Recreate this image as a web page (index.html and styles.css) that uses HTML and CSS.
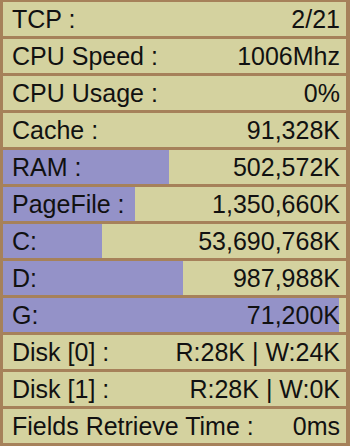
FILE: index.html
```html
<!doctype html>
<html>
  <head>
    <meta charset="UTF-8" />
    <title>System Monitor</title>
    <link rel="stylesheet" href="styles.css">
  </head>
  <body>
    <div class="panel">
      <div class="row"><span class="label">TCP :</span><span class="value">2/21</span></div>
      <div class="row"><span class="label">CPU Speed :</span><span class="value">1006Mhz</span></div>
      <div class="row"><span class="label">CPU Usage :</span><span class="value">0%</span></div>
      <div class="row"><span class="label">Cache :</span><span class="value">91,328K</span></div>
      <div class="row">
        <div class="bar" style="width: 48.5%"></div>
        <span class="label">RAM :</span><span class="value">502,572K</span>
      </div>
      <div class="row">
        <div class="bar" style="width: 38.4%"></div>
        <span class="label">PageFile :</span><span class="value">1,350,660K</span>
      </div>
      <div class="row">
        <div class="bar" style="width: 29%"></div>
        <span class="label">C:</span><span class="value">53,690,768K</span>
      </div>
      <div class="row">
        <div class="bar" style="width: 52.6%"></div>
        <span class="label">D:</span><span class="value">987,988K</span>
      </div>
      <div class="row">
        <div class="bar" style="width: 98%"></div>
        <span class="label">G:</span><span class="value">71,200K</span>
      </div>
      <div class="row"><span class="label">Disk [0] :</span><span class="value">R:28K | W:24K</span></div>
      <div class="row"><span class="label">Disk [1] :</span><span class="value">R:28K | W:0K</span></div>
      <div class="row"><span class="label">Fields Retrieve Time :</span><span class="value">0ms</span></div>
    </div>
  </body>
</html>
```

FILE: styles.css
```css
body {
  margin: 0;
  padding: 0;
  background-color: #a6815a;
  font-family: "Liberation Sans", Arial, sans-serif;
  color: #111;
}

.panel {
  width: 350px;
  height: 446px;
  box-sizing: border-box;
  padding: 2px 4px 3px 3px;
  display: flex;
  flex-direction: column;
  gap: 3px;
  overflow: hidden;
}

.row {
  position: relative;
  height: 34px;
  flex: none;
  display: flex;
  align-items: center;
  justify-content: space-between;
  padding: 0 6px 0 9px;
  background-color: #d4d29f;
  font-size: 25px;
  line-height: 34px;
}

.bar {
  position: absolute;
  top: 0;
  left: 0;
  bottom: 0;
  background-color: #9492c8;
}

.label,
.value {
  position: relative;
  white-space: nowrap;
}
```
